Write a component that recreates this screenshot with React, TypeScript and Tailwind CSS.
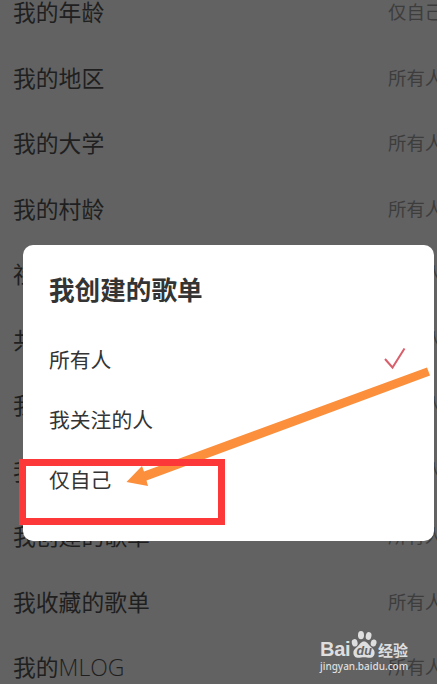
interface SettingRow {
  label: string;
  latin?: string;
  value: string;
}

const rows: SettingRow[] = [
  { label: "我的年龄", value: "仅自己" },
  { label: "我的地区", value: "所有人" },
  { label: "我的大学", value: "所有人" },
  { label: "我的村龄", value: "所有人" },
  { label: "社交关系", value: "所有人" },
  { label: "共同好友", value: "所有人" },
  { label: "我的动态", value: "所有人" },
  { label: "我的排行", value: "所有人" },
  { label: "我创建的歌单", value: "所有人" },
  { label: "我收藏的歌单", value: "所有人" },
  { label: "我的", latin: "MLOG", value: "所有人" },
];

const options = ["所有人", "我关注的人", "仅自己"];

const Paw = () => (
  <svg className="h-[27px] w-[27px] shrink-0" viewBox="0 0 27 27" fill="#dedede">
    <ellipse cx="3.7" cy="11.8" rx="2.9" ry="3.7" transform="rotate(-12 3.7 11.8)" />
    <ellipse cx="10" cy="4.2" rx="3" ry="4.1" />
    <ellipse cx="17.6" cy="5" rx="2.8" ry="3.9" transform="rotate(14 17.6 5)" />
    <ellipse cx="22.6" cy="12" rx="2.9" ry="3.5" transform="rotate(12 22.6 12)" />
    <path d="M13 10.500c3 0 4 2.500 6 4.500s4.600 3.500 4.600 6.700c0 3.400-2.200 5.100-5 5.100-2 0-3.600-.6-5.600-.6s-3.600.6-5.600.6c-2.800 0-5-1.700-5-5.100 0-3.200 2.600-4.700 4.600-6.700S10 10.500 13 10.500z" />
    <text x="13.2" y="24.400" textAnchor="middle" fill="#626262" fontFamily="Liberation Sans, sans-serif" fontSize="12.500" fontStyle="italic" fontWeight="700">
      du
    </text>
  </svg>
);

const Watermark = () => (
  <div className="absolute left-[320px] top-[631px] w-[92px] text-[#dedede]">
    <div className="flex h-[28px] items-end">
      <span className="w-[31px] font-['Liberation_Sans',sans-serif] text-[20px] font-bold leading-[20px] tracking-[-0.3px]">Bai</span>
      <div className="mb-[1px]">
        <Paw />
      </div>
      <span className="whitespace-nowrap text-[15px] font-bold leading-[19px]">经验</span>
    </div>
    <p className="font-['Noto_Sans',sans-serif] text-[10px] font-medium leading-[15px]">jingyan.baidu.com</p>
  </div>
);

const Dialog = () => (
  <div className="absolute left-[23px] top-[245px] h-[296px] w-[411px] rounded-[10px] bg-white px-[26px] pt-[25px] text-[#343434]">
    <h2 className="h-[59px] text-[25.6px] font-bold leading-[38px]">我创建的歌单</h2>
    <ul>
      {options.map((option, i) => (
        <li key={option} className="flex h-[60.300px] items-center justify-between text-[20.8px]">
          <span>{option}</span>
          {i === 0 && (
            <svg className="mr-[2px] h-[22px] w-[22px]" viewBox="0 0 22 22" fill="none" stroke="#d95f6b" strokeWidth="2">
              <path d="M1 11L8.500 19.500L20.500 0.500" />
            </svg>
          )}
        </li>
      ))}
    </ul>
  </div>
);

export default function App() {
  return (
    <div className="relative h-[684px] w-[437px] overflow-hidden bg-[#626262] font-['Noto_Sans_CJK_SC',sans-serif]">
      <div className="-mt-[20.500px] flex flex-col pl-[13px]">
        {rows.map((row) => (
          <div key={row.label} className="flex h-[65.500px] shrink-0 items-center whitespace-nowrap">
            <span className="w-[375px] shrink-0 text-[22.8px] text-[#1f1f1f]">
              {row.label}
              {row.latin && <span className="font-['Open_Sans',sans-serif] text-[23px] font-light text-[#1f1f1f]">{row.latin}</span>}
            </span>
            <span className="shrink-0 text-[18.4px] text-[#3d3d3d]">{row.value}</span>
          </div>
        ))}
      </div>

      <Dialog />

      {/* Arrow pointing at the last option */}
      <svg className="absolute left-0 top-0 h-[684px] w-[437px]" viewBox="0 0 437 684" fill="#fb8f3c">
        <path d="M427 367.500L430 375.500L146.500 480.500L148 486L126.500 482L142 466L144 471.500z" />
      </svg>
      <div className="absolute left-[19px] top-[459px] h-[66px] w-[206px] border-[7px] border-[#fd3838]" />

      <Watermark />
    </div>
  );
}
